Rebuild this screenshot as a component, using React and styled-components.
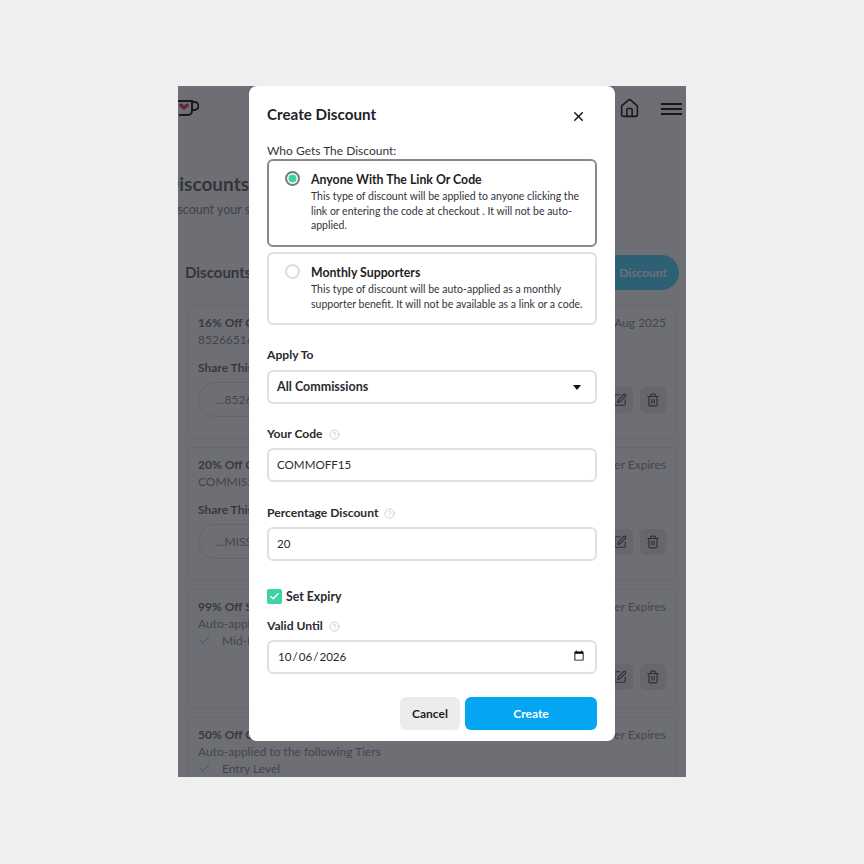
import React from "react";
import styled, { createGlobalStyle } from "styled-components";
import { Home, SquarePen, Trash2, Check, X, CircleHelp } from "lucide-react";

const FONT = `"Lato", "Noto Sans", "Liberation Sans", sans-serif`;

const Global = createGlobalStyle`
  html, body { margin: 0; padding: 0; background: #eef0ef; }
  body { font-family: ${FONT}; color: #222226; }
  * { box-sizing: border-box; }
`;

const Page = styled.div`
  width: 864px;
  height: 864px;
  padding-bottom: 1px;
  display: flex;
  align-items: center;
  justify-content: center;
`;

const Frame = styled.div`
  position: relative;
  width: 508px;
  height: 691px;
  background: #fff;
  overflow: hidden;
`;

const Backdrop = styled.div`
  position: absolute;
  inset: 0;
  background: rgba(13, 15, 25, 0.6);
`;

const Under = styled.div`
  display: flex;
  flex-direction: column;
  color: #6e6e6e;
`;

const TopBar = styled.header`
  height: 46px;
  padding: 12px 4px 0 0;
  display: flex;
  align-items: flex-start;
  justify-content: space-between;
`;

const TopIcons = styled.div`
  display: flex;
  align-items: center;
  gap: 21px;
  color: #2a2a2a;
`;

const Burger = styled.div`
  width: 21px;
  display: flex;
  flex-direction: column;
  gap: 3px;
  & > i { display: block; height: 2px; background: #2a2a2a; }
`;

const LogoSvg = styled.svg`
  margin-left: -3px;
`;

const PageTitle = styled.h1`
  margin: 40px 0 0 -13px;
  font-size: 19px;
  line-height: 24px;
  font-weight: 700;
  white-space: nowrap;
`;

const PageSub = styled.p`
  margin: 6px 0 0 -13px;
  font-size: 12.5px;
  line-height: 16px;
  color: #8c8c8c;
  white-space: nowrap;
`;

const SectionRow = styled.div`
  margin-top: 37px;
  padding: 0 7px;
  height: 35px;
  display: flex;
  align-items: center;
  justify-content: space-between;
`;

const SectionTitle = styled.h2`
  margin: 0;
  padding-bottom: 2px;
  font-size: 15px;
  font-weight: 700;
`;

const PillButton = styled.div`
  height: 35px;
  width: 200px;
  border-radius: 18px;
  background: #5cd7ff;
  color: #fff;
  font-size: 12px;
  font-weight: 700;
  display: flex;
  align-items: center;
  justify-content: flex-end;
  padding-right: 12px;
`;

const DiscountList = styled.div`
  margin: 15px 9px 0;
  display: flex;
  flex-direction: column;
  gap: 8px;
`;

const DiscountCard = styled.article`
  height: ${(p) => p.$h}px;
  padding: 8px 10px;
  border: 1px solid #f0f0f0;
  border-radius: 6px;
  font-size: 12px;
  line-height: 17px;
  color: #969696;
`;

const CardHead = styled.div`
  display: flex;
  justify-content: space-between;
`;

const Strong = styled.div`
  font-weight: 700;
  color: #787878;
`;

const ShareLabel = styled.div`
  margin-top: 11px;
  font-weight: 700;
  color: #787878;
`;

const ShareRow = styled.div`
  margin-top: ${(p) => (p.$solo ? 15 : 6)}px;
  display: flex;
  align-items: center;
  justify-content: flex-end;
  gap: 7px;
`;

const SharePill = styled.div`
  flex: 1;
  height: 35px;
  border: 1px solid #e6e6e6;
  border-radius: 18px;
  padding-left: 17px;
  display: flex;
  align-items: center;
`;

const ActionBtn = styled.div`
  width: 26px;
  height: 26px;
  border-radius: 5px;
  background: #ececec;
  display: flex;
  align-items: center;
  justify-content: center;
  color: #606060;
`;

const TierRow = styled.div`
  display: flex;
  align-items: center;
  gap: 11px;
  & > svg { color: #9be3ed; }
`;

const Modal = styled.div`
  position: absolute;
  top: 0;
  left: 71px;
  width: 366px;
  height: 655px;
  background: #fff;
  border-radius: 8px;
  padding: 0 18px;
  display: flex;
  flex-direction: column;
`;

const ModalHead = styled.div`
  height: 50px;
  display: flex;
  align-items: flex-end;
  justify-content: space-between;
  padding-bottom: 12px;
`;

const ModalTitle = styled.h3`
  margin: 0;
  font-size: 15.2px;
  line-height: 20px;
  font-weight: 700;
  color: #222226;
`;

const CloseBtn = styled.button`
  all: unset;
  display: flex;
  margin: 0 11px 0 0;
  color: #1c1c20;
`;

const WhoLabel = styled.div`
  margin-top: 7px;
  font-size: 12px;
  line-height: 16px;
  color: #33343a;
`;

const Option = styled.div`
  height: ${(p) => p.$h}px;
  margin-top: ${(p) => p.$mt}px;
  border: 2px solid ${(p) => (p.$on ? "#8a8a8c" : "#e0e0e0")};
  border-radius: 6px;
  padding: 10px 8px 0 16px;
  display: flex;
  gap: 11px;
`;

const Radio = styled.span`
  flex: none;
  width: 15px;
  height: 15px;
  border-radius: 50%;
  background: ${(p) => (p.$on ? "#3ed3a2" : "#fff")};
  border: ${(p) => (p.$on ? "2px solid #7b7b80" : "2px solid #dcdcdc")};
  box-shadow: ${(p) => (p.$on ? "inset 0 0 0 1.5px #fff" : "none")};
`;

const OptionBody = styled.div``;

const OptionTitle = styled.div`
  font-size: 12.3px;
  line-height: 18px;
  font-weight: 700;
  color: #1e1e22;
`;

const OptionText = styled.div`
  font-size: 10.5px;
  line-height: 14.6px;
  color: #33343a;
`;

const FieldLabel = styled.div`
  margin-top: ${(p) => p.$mt}px;
  height: 16px;
  font-size: 12.1px;
  line-height: 16px;
  font-weight: 700;
  color: #2a2a2f;
  display: flex;
  align-items: center;
  gap: 6px;
  & > svg { color: #bdbdbd; }
`;

const boxCss = `
  width: 330px;
  height: 34px;
  border: 2px solid #e0e0e0;
  border-radius: 6px;
  background: #fff;
  padding: 0 8px 2px;
  font-family: ${FONT};
  color: #2a2a2f;
  outline: none;
`;

const SelectBox = styled.div`
  ${boxCss}
  margin-top: 7px;
  display: flex;
  align-items: center;
  justify-content: space-between;
  font-size: 12.5px;
  font-weight: 700;
  padding-right: 14px;
`;

const Caret = styled.span`
  width: 0;
  height: 0;
  margin-top: 2px;
  border-left: 4.5px solid transparent;
  border-right: 4.5px solid transparent;
  border-top: 5px solid #111;
`;

const TextInput = styled.input`
  ${boxCss}
  display: block;
  margin-top: 6px;
  font-size: 11.6px;
`;

const CheckRow = styled.div`
  margin-top: 28px;
  display: flex;
  align-items: center;
  gap: 4px;
  font-size: 12.3px;
  line-height: 15px;
  font-weight: 700;
  color: #2a2a2f;
`;

const CheckBox = styled.span`
  width: 15px;
  height: 15px;
  border-radius: 2px;
  background: #3ed3a2;
  color: #fff;
  display: flex;
  align-items: center;
  justify-content: center;
`;

const Actions = styled.div`
  margin-top: 23px;
  display: flex;
  justify-content: flex-end;
  gap: 5px;
`;

const Button = styled.button`
  height: 33px;
  width: ${(p) => (p.$primary ? 132 : 60)}px;
  border: 0;
  border-radius: 6px;
  background: ${(p) => (p.$primary ? "#04a6f2" : "#ececec")};
  color: ${(p) => (p.$primary ? "#fff" : "#1e1e22")};
  font-family: ${FONT};
  font-size: 12px;
  font-weight: 700;
`;

const Cup = () => (
  <LogoSvg width="24" height="20" viewBox="0 0 24 20" fill="none">
    <path d="M1 3h16v10a4 4 0 0 1-4 4H4" stroke="#2a2a2a" strokeWidth="2" />
    <path d="M17 4h2.500a3.500 3.500 0 0 1 0 8H17" stroke="#2a2a2a" strokeWidth="2" />
    <path d="M9 12 4.500 8.200C3 6.500 5.800 4.500 7.500 6.200L9 7.500l1.500-1.300c1.700-1.700 4.500.3 3 2z" fill="#f04060" />
  </LogoSvg>
);

const Help = () => <CircleHelp size={11} strokeWidth={1.5} />;

const Tools = () => (
  <>
    <ActionBtn><SquarePen size={14} /></ActionBtn>
    <ActionBtn><Trash2 size={14} /></ActionBtn>
  </>
);

export default function App() {
  return (
    <Page>
      <Global />
      <Frame>
        <Under>
          <TopBar>
            <Cup />
            <TopIcons>
              <Home size={21} strokeWidth={1.8} />
              <Burger><i /><i /><i /></Burger>
            </TopIcons>
          </TopBar>
          <PageTitle>Discounts</PageTitle>
          <PageSub>Discount your supporters</PageSub>
          <SectionRow>
            <SectionTitle>Discounts</SectionTitle>
            <PillButton>Discount</PillButton>
          </SectionRow>
          <DiscountList>
            <DiscountCard $h={134}>
              <CardHead><Strong>16% Off Commissions</Strong><span>Expires 31 Aug 2025</span></CardHead>
              <div>85266516</div>
              <ShareLabel>Share This</ShareLabel>
              <ShareRow>
                <SharePill>...85266516</SharePill>
                <Tools />
              </ShareRow>
            </DiscountCard>
            <DiscountCard $h={134}>
              <CardHead><Strong>20% Off Commissions</Strong><span>Never Expires</span></CardHead>
              <div>COMMISSION20</div>
              <ShareLabel>Share This</ShareLabel>
              <ShareRow>
                <SharePill>...MISSION20</SharePill>
                <Tools />
              </ShareRow>
            </DiscountCard>
            <DiscountCard $h={120}>
              <CardHead><Strong>99% Off Shop</Strong><span>Never Expires</span></CardHead>
              <div>Auto-applied to the following Tiers</div>
              <TierRow><Check size={13} />Mid-Level</TierRow>
              <ShareRow $solo>
                <Tools />
              </ShareRow>
            </DiscountCard>
            <DiscountCard $h={120}>
              <CardHead><Strong>50% Off Commissions</Strong><span>Never Expires</span></CardHead>
              <div>Auto-applied to the following Tiers</div>
              <TierRow><Check size={13} />Entry Level</TierRow>
            </DiscountCard>
          </DiscountList>
        </Under>
        <Backdrop />
        <Modal>
          <ModalHead>
            <ModalTitle>Create Discount</ModalTitle>
            <CloseBtn aria-label="Close"><X size={15} strokeWidth={2.4} /></CloseBtn>
          </ModalHead>
          <WhoLabel>Who Gets The Discount:</WhoLabel>
          <Option $on $h={88} $mt={0}>
            <Radio $on />
            <OptionBody>
              <OptionTitle>Anyone With The Link Or Code</OptionTitle>
              <OptionText>This type of discount will be applied to anyone clicking the link or entering the code at checkout . It will not be auto-applied.</OptionText>
            </OptionBody>
          </Option>
          <Option $h={73} $mt={5}>
            <Radio />
            <OptionBody>
              <OptionTitle>Monthly Supporters</OptionTitle>
              <OptionText>This type of discount will be auto-applied as a monthly supporter benefit. It will not be available as a link or a code.</OptionText>
            </OptionBody>
          </Option>
          <FieldLabel $mt={22}>Apply To</FieldLabel>
          <SelectBox>All Commissions<Caret /></SelectBox>
          <FieldLabel $mt={22}>Your Code <Help /></FieldLabel>
          <TextInput defaultValue="COMMOFF15" />
          <FieldLabel $mt={23}>Percentage Discount <Help /></FieldLabel>
          <TextInput defaultValue="20" />
          <CheckRow>
            <CheckBox><Check size={11} strokeWidth={3} /></CheckBox>
            Set Expiry
          </CheckRow>
          <FieldLabel $mt={14}>Valid Until <Help /></FieldLabel>
          <TextInput type="date" defaultValue="2026-10-06" />
          <Actions>
            <Button>Cancel</Button>
            <Button $primary>Create</Button>
          </Actions>
        </Modal>
      </Frame>
    </Page>
  );
}
